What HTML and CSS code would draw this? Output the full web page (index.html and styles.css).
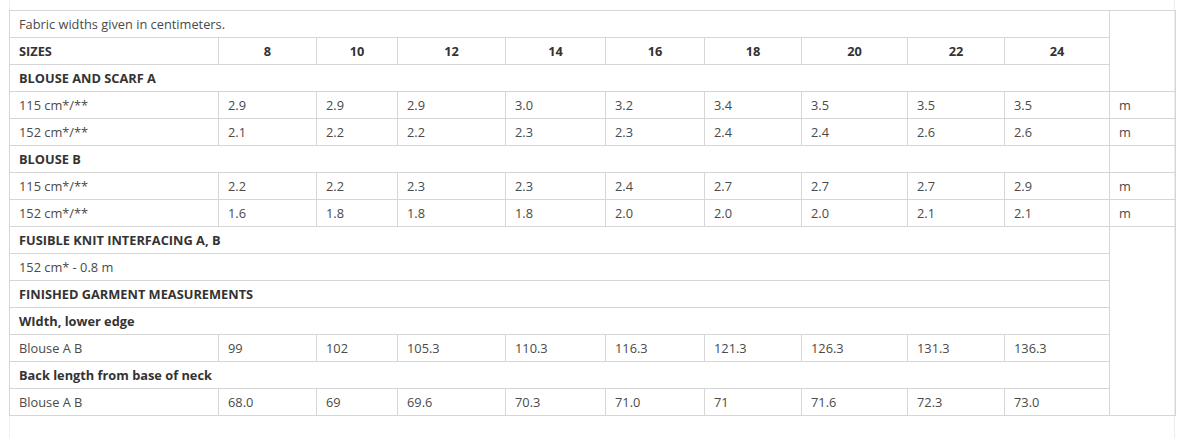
FILE: index.html
```html
<!DOCTYPE html>
<html>
<head>
<meta charset="utf-8">
<link rel="stylesheet" href="styles.css">
</head>
<body>
<div class="wrap">
<table class="chart">
  <colgroup>
    <col class="c-label"><col class="c-8"><col class="c-10"><col class="c-12"><col class="c-14"><col class="c-16"><col class="c-18"><col class="c-20"><col class="c-22"><col class="c-24"><col class="c-unit">
  </colgroup>
  <tr><td colspan="10">Fabric widths given in centimeters.</td><td rowspan="3"></td></tr>
  <tr class="sizes"><th class="lbl">SIZES</th><th>8</th><th>10</th><th>12</th><th>14</th><th>16</th><th>18</th><th>20</th><th>22</th><th>24</th></tr>
  <tr><th class="lbl" colspan="10">BLOUSE AND SCARF A</th></tr>
  <tr><td>115 cm*/**</td><td>2.9</td><td>2.9</td><td>2.9</td><td>3.0</td><td>3.2</td><td>3.4</td><td>3.5</td><td>3.5</td><td>3.5</td><td>m</td></tr>
  <tr><td>152 cm*/**</td><td>2.1</td><td>2.2</td><td>2.2</td><td>2.3</td><td>2.3</td><td>2.4</td><td>2.4</td><td>2.6</td><td>2.6</td><td>m</td></tr>
  <tr><th class="lbl" colspan="10">BLOUSE B</th><td></td></tr>
  <tr><td>115 cm*/**</td><td>2.2</td><td>2.2</td><td>2.3</td><td>2.3</td><td>2.4</td><td>2.7</td><td>2.7</td><td>2.7</td><td>2.9</td><td>m</td></tr>
  <tr><td>152 cm*/**</td><td>1.6</td><td>1.8</td><td>1.8</td><td>1.8</td><td>2.0</td><td>2.0</td><td>2.0</td><td>2.1</td><td>2.1</td><td>m</td></tr>
  <tr><th class="lbl" colspan="10">FUSIBLE KNIT INTERFACING A, B</th><td rowspan="7"></td></tr>
  <tr><td colspan="10">152 cm* - 0.8 m</td></tr>
  <tr><th class="lbl" colspan="10">FINISHED GARMENT MEASUREMENTS</th></tr>
  <tr><th class="lbl" colspan="10">WIdth, lower edge</th></tr>
  <tr><td>Blouse A B</td><td>99</td><td>102</td><td>105.3</td><td>110.3</td><td>116.3</td><td>121.3</td><td>126.3</td><td>131.3</td><td>136.3</td></tr>
  <tr><th class="lbl" colspan="10">Back length from base of neck</th></tr>
  <tr><td>Blouse A B</td><td>68.0</td><td>69</td><td>69.6</td><td>70.3</td><td>71.0</td><td>71</td><td>71.6</td><td>72.3</td><td>73.0</td></tr>
</table>
</div>
</body>
</html>
```
FILE: styles.css
```css
html, body {
  margin: 0;
  padding: 0;
  background: #fff;
}
body {
  font-family: "Open Sans", "Noto Sans", sans-serif;
  font-size: 12.8px;
  color: #4a4a4a;
}
.wrap {
  margin-left: 9px;
  width: 1166px;
  min-height: 438px;
  box-sizing: border-box;
  padding-top: 10px;
  border-left: 1px solid #f0f0f0;
  border-right: 1px solid #ececec;
}
.chart {
  border-collapse: collapse;
  table-layout: fixed;
  width: 1166px;
  margin-left: -1px;
}
.c-label { width: 209px; }
.c-8 { width: 98px; }
.c-10 { width: 81px; }
.c-12 { width: 108px; }
.c-14 { width: 100px; }
.c-16 { width: 99px; }
.c-18 { width: 97px; }
.c-20 { width: 106px; }
.c-22 { width: 97px; }
.c-24 { width: 105px; }
.c-unit { width: 66px; }
.chart td, .chart th {
  border: 1px solid #d6d6d6;
  height: 27px;
  padding: 0 9px;
  box-sizing: border-box;
  text-align: left;
  vertical-align: middle;
  white-space: nowrap;
  line-height: 16px;
}
.chart th {
  font-weight: 700;
  color: #333;
  text-align: center;
}
.chart th.lbl {
  text-align: left;
}
```
